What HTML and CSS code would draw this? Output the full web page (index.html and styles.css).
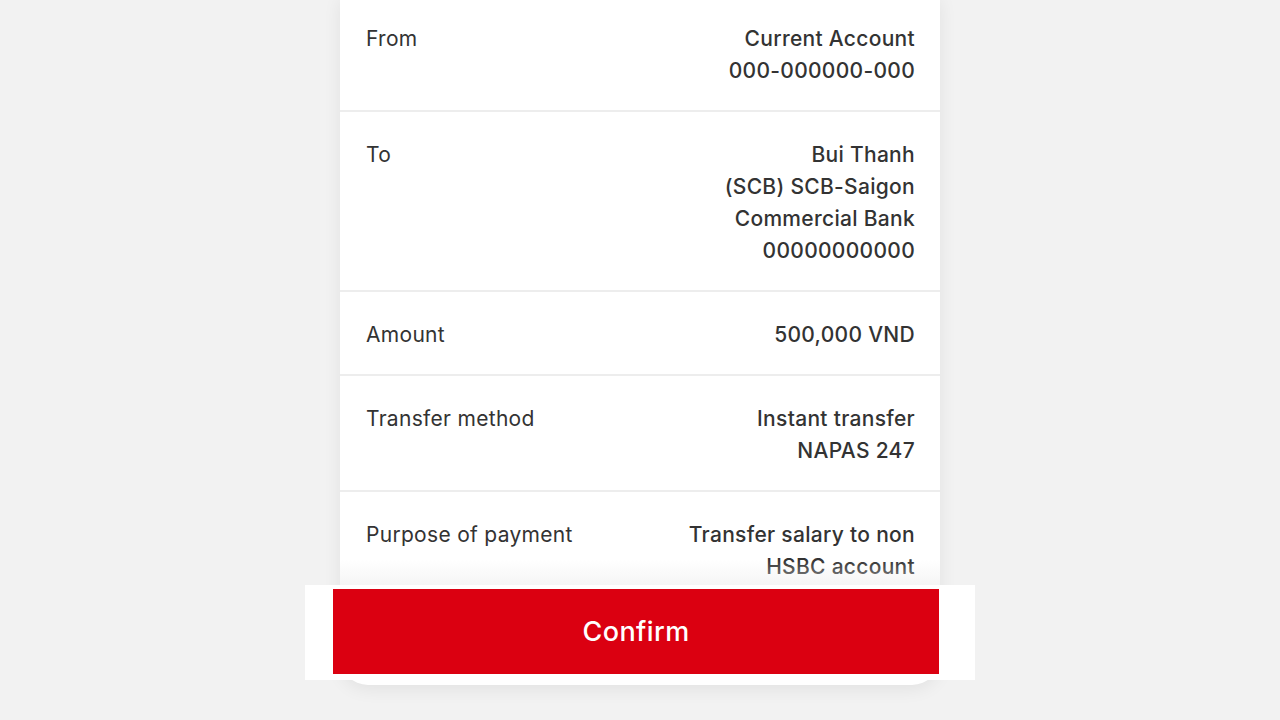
FILE: index.html
```html
<!DOCTYPE html>
<html lang="en">
<head>
    <meta charset="UTF-8">
    <meta name="viewport" content="width=device-width, initial-scale=1.0">
    <title>Confirm transfer</title>
    <link rel="stylesheet" href="styles.css">
</head>
<body>
    <div class="screen">
        <div class="card">
            <div class="row">
                <div class="label">From</div>
                <div class="value">Current Account<br>000-000000-000</div>
            </div>
            <div class="row">
                <div class="label">To</div>
                <div class="value">Bui Thanh<br>(SCB) SCB-Saigon<br>Commercial Bank<br>00000000000</div>
            </div>
            <div class="row">
                <div class="label">Amount</div>
                <div class="value">500,000 VND</div>
            </div>
            <div class="row">
                <div class="label">Transfer method</div>
                <div class="value">Instant transfer<br>NAPAS 247</div>
            </div>
            <div class="row">
                <div class="label">Purpose of payment</div>
                <div class="value">Transfer salary to non<br>HSBC account</div>
            </div>
        </div>

        <!-- sticky action bar over the bottom of the card -->
        <div class="action-bar">
            <button class="confirm">Confirm</button>
        </div>
    </div>
</body>
</html>
```

FILE: styles.css
```css
body {
    margin: 0;
    background: #f2f2f2;
    font-family: Inter, "Open Sans", Arial, sans-serif;
    color: #333;
    overflow: hidden;
}

.screen {
    position: relative;
    display: flow-root;
    width: 600px;
    height: 720px;
    margin: 0 auto;
}

.card {
    position: relative;
    margin-top: -4px;
    height: 689px;
    background: #fff;
    border-radius: 0 0 28px 28px;
    box-shadow: 0 4px 18px rgba(0, 0, 0, 0.07);
    overflow: hidden;
}

.card::after {
    content: "";
    position: absolute;
    left: 0;
    right: 0;
    top: 564px;
    height: 26px;
    background: linear-gradient(rgba(240, 240, 240, 0), rgba(236, 236, 236, 0.55));
}

.row {
    display: flex;
    justify-content: space-between;
    padding: 27px 25px 23px 26px;
    border-bottom: 2px solid #ededed;
    font-size: 21px;
    letter-spacing: 0.3px;
    line-height: 32px;
}

.label {
    font-weight: 400;
}

.value {
    font-weight: 500;
    text-align: right;
}

.action-bar {
    position: absolute;
    top: 585px;
    left: -35px;
    width: 670px;
    height: 95px;
    box-sizing: border-box;
    padding: 4px 36px 6px 28px;
    background: #fff;
}

.confirm {
    display: block;
    width: 100%;
    height: 100%;
    border: none;
    background: #db0011;
    color: #fff;
    font-family: inherit;
    font-size: 27px;
    letter-spacing: 0.4px;
    font-weight: 500;
    cursor: pointer;
}
```
